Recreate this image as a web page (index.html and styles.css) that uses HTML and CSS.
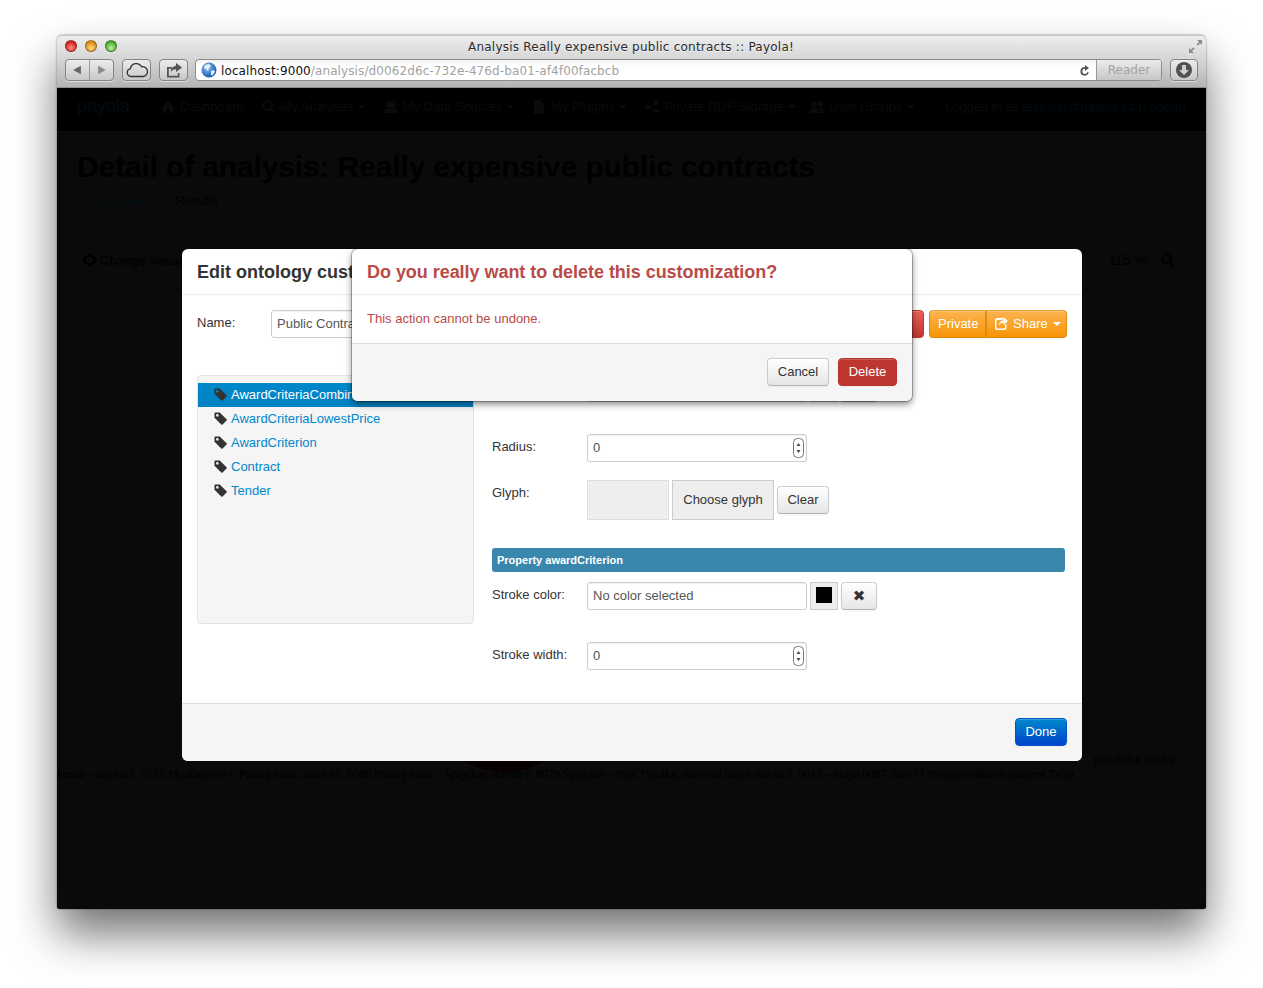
FILE: index.html
```html
<!DOCTYPE html>
<html lang="en">
<head>
<meta charset="utf-8">
<title>Analysis Really expensive public contracts :: Payola!</title>
<link rel="stylesheet" href="styles.css">
</head>
<body>
<svg class="defs" width="0" height="0" aria-hidden="true">
  <symbol id="tag" viewBox="0 0 14 14"><path fill-rule="evenodd" d="M1 0.5h5.2l7.3 7.3a1 1 0 0 1 0 1.4l-4.3 4.3a1 1 0 0 1-1.4 0L0.5 6.2V1a.5.5 0 0 1 .5-.5zM3.6 2.2a1.4 1.4 0 1 0 0 2.8 1.4 1.4 0 0 0 0-2.8z"/></symbol>
  <symbol id="spin" viewBox="0 0 11 20"><rect x=".5" y=".5" width="10" height="19" rx="4" fill="#fff" stroke="#777"/><path d="M5.5 5l2 3h-4zM5.5 15l-2-3h4z" fill="#444"/></symbol>
</svg>
<div class="window">
  <header class="chrome">
    <div class="titlebar">
      <span class="light light-red"></span><span class="light light-amber"></span><span class="light light-green"></span>
      <span class="title">Analysis Really expensive public contracts :: Payola!</span>
      <svg class="expand" width="15" height="15" viewBox="0 0 15 15"><path d="M9 1h5v5l-1.8-1.8-2.6 2.6-1.2-1.2 2.6-2.6zM6 14H1V9l1.8 1.8 2.6-2.6 1.2 1.2-2.6 2.6z" fill="#8c8c8c"/></svg>
    </div>
    <div class="toolbar">
      <div class="tool tool-nav">
        <svg width="24" height="20" viewBox="0 0 24 20"><path d="M15.500 5.500v9L7.500 10z" fill="#666"/></svg>
        <span class="tool-sep"></span>
        <svg width="24" height="20" viewBox="0 0 24 20"><path d="M8.500 5.500v9l8-4.500z" fill="#8a8a8a"/></svg>
      </div>
      <div class="tool tool-cloud">
        <svg width="24" height="16" viewBox="0 0 24 16"><path d="M6 14.5a4 4 0 0 1-.6-7.9A6 6 0 0 1 16.6 4.8 4.8 4.8 0 0 1 18.5 14.5z" fill="none" stroke="#333" stroke-width="1.3"/></svg>
      </div>
      <div class="tool tool-share">
        <svg width="18" height="16" viewBox="0 0 18 16"><path d="M2 5h5v1.8H3.8v7h9V11h1.7v4.5H2z" fill="#555"/><path d="M11 1l6 4.500-6 4.500V7.300C8.500 7.300 6.800 8.200 5.600 10.500 5.800 6.500 8 4 11 3.700z" fill="#555"/></svg>
      </div>
      <div class="urlbar">
        <svg class="globe" width="16" height="16" viewBox="0 0 16 16"><defs><radialGradient id="glb" cx=".4" cy=".35" r=".7"><stop offset="0" stop-color="#8ec5f5"/><stop offset="1" stop-color="#0b4ea8"/></radialGradient></defs><circle cx="8" cy="8" r="7.500" fill="url(#glb)"/><path d="M4 3l4-1 2 2-2 2-1 3-2-2-2-1zM10 9l3-1 1 2-3 4-1-2z" fill="#e6eef5"/></svg>
        <span class="url"><span class="url-host">localhost:9000</span>/analysis/d0062d6c-732e-476d-ba01-af4f00facbcb</span>
        <svg class="reload" width="12" height="13" viewBox="0 0 12 13"><path d="M9.800 8.600A4.300 4.300 0 1 1 6 3v-2l4 3-4 3V4.800a2.600 2.600 0 1 0 2.400 3.200z" fill="#555"/></svg>
        <span class="reader">Reader</span>
      </div>
      <div class="tool tool-download">
        <svg width="18" height="18" viewBox="0 0 18 18"><circle cx="9" cy="9" r="8" fill="#505050"/><path d="M7 4h4v5h3l-5 5-5-5h3z" fill="#d0d0d0"/></svg>
      </div>
    </div>
  </header>

  <main class="page">
    <nav class="nav">
      <span class="logo">payola</span>
      <span class="nav-item"><svg class="nav-icon" viewBox="0 0 14 14"><path d="M7 1l7 6.500h-2V13H8.500V9h-3v4H2V7.500H0z"/></svg>Dashboard</span>
      <span class="nav-item"><svg class="nav-icon" viewBox="0 0 14 14"><path fill-rule="evenodd" d="M5.500 0a5.500 5.500 0 0 1 4.400 8.800l4 4-1.200 1.200-4-4A5.500 5.500 0 1 1 5.500 0zm0 2a3.500 3.500 0 1 0 0 7 3.500 3.500 0 0 0 0-7z"/></svg>My Analyses<span class="caret"></span></span>
      <span class="nav-item"><svg class="nav-icon" viewBox="0 0 14 14"><path d="M3 1h8l1 7H2zM1 9h12v4H1z"/></svg>My Data Sources<span class="caret"></span></span>
      <span class="nav-item"><svg class="nav-icon" viewBox="0 0 14 14"><path d="M2 0h6l4 4v10H2z"/></svg>My Plugins<span class="caret"></span></span>
      <span class="nav-item nav-item-tight"><svg class="nav-icon" viewBox="0 0 14 14"><circle cx="3" cy="7" r="2.500"/><circle cx="11" cy="3" r="2.500"/><circle cx="11" cy="11" r="2.500"/><path d="M3 7l8-4M3 7l8 4" stroke="#0b0b0b"/></svg>Private RDF Storage<span class="caret"></span></span>
      <span class="nav-item"><svg class="nav-icon" viewBox="0 0 14 14"><circle cx="4.500" cy="4" r="3"/><circle cx="10" cy="4" r="3"/><path d="M0 13c0-4 2-5 4.500-5S9 9 9 13zM10 13c0-2-.4-3.500-1-5 3-.5 5 1 5 5z"/></svg>User Groups<span class="caret"></span></span>
      <span class="nav-user">Logged in as <span class="nav-link">testuser@payola.cz (Logout)</span></span>
    </nav>

    <h1 class="heading">Detail of analysis: Really expensive public contracts</h1>
    <div class="tabs"><span class="tab-active">Overview</span><span>Results</span></div>

    <div class="viewbar">
      <span class="change-visual"><svg class="eye" viewBox="0 0 16 12"><path fill-rule="evenodd" d="M8 0c4 0 7 3.500 8 6-1 2.500-4 6-8 6S1 8.500 0 6c1-2.500 4-6 8-6zm0 2.500a3.500 3.500 0 1 0 0 7 3.500 3.500 0 0 0 0-7z"/></svg>Change visualization</span>
      <span class="zoom-box">115 %<svg class="zoom-icon" viewBox="0 0 14 14"><path fill-rule="evenodd" d="M5.500 0a5.500 5.500 0 0 1 4.400 8.800l4 4-1.200 1.200-4-4A5.500 5.500 0 1 1 5.500 0zm0 2a3.500 3.500 0 1 0 0 7 3.500 3.500 0 0 0 0-7z"/></svg></span>
    </div>

    <div class="marker"></div>
    <p class="desc desc-first">provádění stavby</p>
    <p class="desc">kruhu – stavba č. 9515 Myslbekova – Prašný most, stavba č. 0080 Prašný most – Špejchar, stavba č. 0079 Špejchar – Pelc Tyrolka, stavební část a stavba č. 0012 – etapa 0007, část 11 Protipovodňová opatření Trója</p>

    <section class="modal modal-edit">
      <div class="modal-header"><h3 class="modal-title">Edit ontology customization</h3></div>
      <div class="modal-body">
        <div class="name-row">
          <span class="field-label name-label">Name:</span>
          <span class="input name-input">Public Contracts</span>
          <div class="actions">
            <span class="btn btn-danger">Delete</span>
            <div class="btn-group">
              <span class="btn btn-warning">Private</span>
              <span class="btn btn-warning"><svg class="share-icon" viewBox="0 0 13 13"><path fill-rule="evenodd" d="M2 1h6v1.500L5.500 3H2.500a1 1 0 0 0-1 1v6.500a1 1 0 0 0 1 1H9a1 1 0 0 0 1-1V8l1.500-1.200V11a2 2 0 0 1-2 2H2a2 2 0 0 1-2-2V3a2 2 0 0 1 2-2z"/><path d="M8.500 0L13 4 8.500 8V5.800C6.500 5.800 5 6.500 4 8.500 4 5.500 6 3.500 8.500 3.200z"/></svg>Share<span class="caret caret-light"></span></span>
            </div>
          </div>
        </div>
        <div class="columns">
          <ul class="classes">
            <li class="class-item class-active"><svg class="tag-icon"><use href="#tag"/></svg>AwardCriteriaCombination</li>
            <li class="class-item"><svg class="tag-icon"><use href="#tag"/></svg>AwardCriteriaLowestPrice</li>
            <li class="class-item"><svg class="tag-icon"><use href="#tag"/></svg>AwardCriterion</li>
            <li class="class-item"><svg class="tag-icon"><use href="#tag"/></svg>Contract</li>
            <li class="class-item"><svg class="tag-icon"><use href="#tag"/></svg>Tender</li>
          </ul>
          <div class="props">
            <div class="prop-row">
              <span class="field-label">Fill color:</span>
              <span class="input color-input">No color selected</span>
              <span class="swatch-btn"><span class="swatch"></span></span>
              <span class="btn clear-x">✖</span>
            </div>
            <div class="prop-row row-radius">
              <span class="field-label">Radius:</span>
              <span class="input number-input">0<svg class="spin"><use href="#spin"/></svg></span>
            </div>
            <div class="prop-row row-glyph">
              <span class="field-label">Glyph:</span>
              <span class="glyph-box"></span>
              <span class="glyph-choose">Choose glyph</span>
              <span class="btn glyph-clear">Clear</span>
            </div>
            <div class="prop-title">Property awardCriterion</div>
            <div class="prop-row">
              <span class="field-label">Stroke color:</span>
              <span class="input color-input">No color selected</span>
              <span class="swatch-btn"><span class="swatch"></span></span>
              <span class="btn clear-x">✖</span>
            </div>
            <div class="prop-row row-radius">
              <span class="field-label">Stroke width:</span>
              <span class="input number-input">0<svg class="spin"><use href="#spin"/></svg></span>
            </div>
          </div>
        </div>
      </div>
      <div class="modal-footer"><span class="btn btn-primary">Done</span></div>
    </section>

    <section class="modal modal-confirm">
      <div class="modal-header"><h3 class="modal-title title-danger">Do you really want to delete this customization?</h3></div>
      <div class="confirm-body">This action cannot be undone.</div>
      <div class="modal-footer confirm-footer"><span class="btn btn-cancel">Cancel</span><span class="btn btn-delete">Delete</span></div>
    </section>
  </main>
</div>
</body>
</html>
```
FILE: styles.css
```css
* { box-sizing: border-box; }
html, body { margin: 0; padding: 0; height: 988px; overflow: hidden; background: #fff; }
body { font-family: "Liberation Sans", Arial, sans-serif; font-size: 13px; color: #333; }
.defs { position: absolute; }

.window {
  width: 1149px; height: 874px; margin: 35px 0 0 57px;
  display: flex; flex-direction: column;
  border-radius: 5px 5px 2px 2px;
  box-shadow: 0 25px 45px rgba(0,0,0,.55), 0 0 2px rgba(0,0,0,.5);
}

/* Browser chrome */
.chrome {
  height: 53px; flex: none;
  background: linear-gradient(#ededed, #d6d6d6 45%, #b4b4b4);
  border-top: 1px solid #c4c4c4;
  border-bottom: 1px solid #8e8e8e;
  border-radius: 5px 5px 0 0;
  font-family: "DejaVu Sans", sans-serif;
}
.titlebar { position: relative; height: 23px; display: flex; align-items: center; padding: 0 0 4px 8px; gap: 8px; }
.light { width: 12px; height: 12px; border-radius: 50%; border: 1px solid rgba(0,0,0,.35); }
.light-red { background: radial-gradient(circle at 50% 70%, #ff8f8a, #d8201c 70%); }
.light-amber { background: radial-gradient(circle at 50% 70%, #ffd98a, #d98b12 70%); }
.light-green { background: radial-gradient(circle at 50% 70%, #bdf29a, #4da82c 70%); }
.title { position: absolute; left: 411px; top: 3px; font-size: 12px; letter-spacing: .23px; line-height: 17px; color: #2a2a2a; white-space: nowrap; text-shadow: 0 1px 0 rgba(255,255,255,.6); }
.expand { position: absolute; right: 3px; top: 3px; }
.toolbar { display: flex; align-items: flex-start; padding-left: 8px; }
.tool {
  height: 22px; display: flex; align-items: center; justify-content: center;
  border: 1px solid #858585; border-radius: 4px;
  background: linear-gradient(#ececec, #c8c8c8);
  box-shadow: 0 1px 0 rgba(255,255,255,.5);
}
.tool-nav { width: 49px; }
.tool-sep { width: 1px; height: 20px; background: #9a9a9a; }
.tool-cloud { width: 29px; margin-left: 8px; }
.tool-share { width: 29px; margin-left: 8px; }
.tool-download { width: 28px; margin-left: 8px; }
.urlbar {
  width: 967px; height: 22px; margin-left: 7px;
  display: flex; align-items: center;
  background: linear-gradient(#f2f2f2, #fff 30%);
  border: 1px solid #8c8c8c; border-radius: 4px; padding-left: 5px;
  overflow: hidden;
}
.globe { flex: none; }
.url { margin-left: 4px; padding-top: 1px; font-size: 12px; letter-spacing: .1px; color: #a2a2a2; white-space: nowrap; flex: 1; }
.url-host { color: #111; }
.reload { flex: none; margin-right: 5px; }
.reader {
  width: 65px; height: 20px; flex: none; text-align: center; line-height: 21px;
  font-size: 12px; color: #a4a4a4; background: linear-gradient(#ececec, #c6c6c6);
  border-left: 1px solid #9a9a9a;
}

/* Dimmed page behind the dialogs */
.page { position: relative; flex: 1; background: #0a0a0a; overflow: hidden; color: #000; border-radius: 0 0 2px 2px; }
.nav {
  height: 44px; background: #000; border-bottom: 1px solid #0f0f0f;
  display: flex; align-items: center; gap: 10px; padding: 0 20px 6px 20px; color: #0b0b0b; white-space: nowrap;
}
.logo { width: 74px; font-size: 18px; color: #010d10; }
.nav-item { display: flex; align-items: center; padding-right: 8px; }
.nav-item-tight { padding-right: 4px; }
.nav-icon { width: 14px; height: 14px; margin-right: 5px; fill: #0b0b0b; }
.caret { display: inline-block; margin-left: 4px; border-top: 4px solid #0b0b0b; border-left: 4px solid transparent; border-right: 4px solid transparent; }
.caret-light { border-top-color: #fff; vertical-align: 2px; margin-left: 5px; }
.nav-user { margin-left: auto; font-size: 12.8px; }
.nav-link { color: #000c12; }
.heading { margin: 15px 0 0 20px; font-size: 30px; letter-spacing: -.14px; line-height: 40px; font-weight: bold; color: #000; white-space: nowrap; }
.tabs { display: flex; gap: 29px; margin: 4px 0 0 35px; line-height: 20px; color: #000; }
.tab-active { color: #000a10; }
.viewbar { display: flex; justify-content: space-between; margin: 37px 31px 0 21px; height: 24px; align-items: center; white-space: nowrap; font-size: 13px; }
.change-visual { display: flex; align-items: center; padding-left: 4px; }
.eye { width: 15px; height: 12px; margin-right: 3px; fill: #000; }
.zoom-box { display: flex; align-items: center; font-size: 14px; }
.zoom-icon { width: 14px; height: 14px; margin-left: 14px; fill: #000; }
.marker { position: absolute; left: 369px; top: 528px; width: 156px; height: 156px; border-radius: 50%; background: #080000; }
.desc { position: relative; margin: 0; font-family: "Liberation Serif", serif; font-size: 12px; letter-spacing: -.05px; line-height: 15px; color: #000; white-space: nowrap; }
.desc-first { margin-top: 480px; text-align: right; padding-right: 31px; }

/* Dialogs */
.modal {
  position: absolute; top: 161px; background: #fff;
  border-radius: 6px; display: flex; flex-direction: column; overflow: hidden;
}
.modal-edit { left: 125px; width: 900px; height: 512px; }
.modal-confirm { left: 295px; width: 560px; height: 152px; box-shadow: 0 0 0 1px rgba(0,0,0,.25), 0 3px 7px rgba(0,0,0,.5); }
.modal-header { height: 46px; flex: none; padding: 0 15px; border-bottom: 1px solid #eee; display: flex; align-items: center; }
.modal-title { margin: 0; font-size: 18px; line-height: 24px; font-weight: bold; color: #333; white-space: nowrap; }
.title-danger { color: #b94a48; letter-spacing: -.04px; }
.modal-body { flex: 1; padding: 15px; color: #333; }
.modal-footer { flex: none; height: 58px; background: #f5f5f5; border-top: 1px solid #ddd; padding: 14px 15px 0; display: flex; justify-content: flex-end; }
.confirm-body { flex: 1; padding: 15px; line-height: 18px; color: #b94a48; }
.confirm-footer { gap: 9px; }

.name-row { display: flex; align-items: flex-start; height: 28px; }
.field-label { flex: none; width: 95px; padding-top: 4px; line-height: 18px; color: #333; }
.name-label { width: 74px; }
.input { display: block; height: 28px; background: #fff; border: 1px solid #ccc; border-radius: 3px; padding: 0 5px; line-height: 26px; color: #555; box-shadow: inset 0 1px 1px rgba(0,0,0,.06); white-space: nowrap; }
.name-input { width: 330px; }
.actions { margin-left: auto; display: flex; gap: 5px; }
.btn-group { display: flex; }
.btn {
  display: inline-block; height: 28px; padding: 0 11px; line-height: 26px; text-align: center;
  border: 1px solid #ccc; border-bottom-color: #b3b3b3; border-radius: 4px; color: #333;
  background: linear-gradient(#fff, #e6e6e6); white-space: nowrap;
  box-shadow: inset 0 1px 0 rgba(255,255,255,.2), 0 1px 2px rgba(0,0,0,.05);
}
.btn-danger { width: 65px; color: #fff; background: linear-gradient(#ee5f5b, #bd362f); border-color: #bd362f; }
.btn-warning { color: #fff; background: linear-gradient(#fbb450, #f89406); border-color: #f0a030 #e08c0c #d98606; padding: 0 8px; }
.btn-group .btn-warning:first-child { border-radius: 4px 0 0 4px; width: 57px; }
.btn-group .btn-warning:last-child { border-radius: 0 4px 4px 0; width: 81px; border-left-color: #e08c0c; }
.share-icon { width: 13px; height: 13px; margin-right: 5px; vertical-align: -2px; fill: #fff; }
.btn-primary { width: 52px; padding: 0; color: #fff; background: linear-gradient(#0088cc, #0044cc); border-color: #0055cc; }
.btn-cancel { width: 62px; padding: 0; }
.btn-delete { width: 59px; padding: 0; color: #fff; background: #bd362f; border-color: #b5332c; }

.columns { display: flex; gap: 18px; margin-top: 37px; }
.classes { list-style: none; margin: 0; padding: 7px 0 0; width: 277px; height: 249px; background: #f5f5f5; border: 1px solid #e3e3e3; border-radius: 4px; }
.class-item { height: 24px; padding: 0 0 2px 16px; display: flex; align-items: center; color: #0088cc; white-space: nowrap; overflow: hidden; }
.class-active { color: #fff; background: linear-gradient(#0088cc, #0081c2); }
.tag-icon { width: 13px; height: 13px; margin: 0 4px 0 0; flex: none; fill: #333; }
.props { width: 573px; margin-top: -1px; }
.prop-row { display: flex; align-items: flex-start; }
.color-input { width: 220px; }
.swatch-btn { width: 28px; height: 28px; margin-left: 3px; display: flex; justify-content: center; padding-top: 4px; background: #eee; border: 1px solid #ccc; }
.swatch { width: 16px; height: 16px; background: #000; }
.clear-x { width: 36px; padding: 0; margin-left: 3px; font-family: "DejaVu Sans", sans-serif; font-size: 15px; }
.row-radius { margin-top: 32px; }
.number-input { position: relative; width: 220px; }
.spin { position: absolute; right: 2px; top: 3px; width: 11px; height: 20px; }
.row-glyph { margin-top: 18px; }
.glyph-box { width: 82px; height: 40px; background: #eee; border: 1px solid #ddd; }
.glyph-choose { width: 102px; height: 40px; margin-left: 3px; line-height: 38px; text-align: center; background: #eee; border: 1px solid #ccc; color: #333; }
.glyph-clear { width: 52px; padding: 0; margin: 6px 0 0 3px; }
.prop-title { margin: 28px 0 10px; height: 24px; line-height: 24px; padding-left: 5px; font-size: 11px; font-weight: bold; color: #fff; background: #3a87ad; border-radius: 3px; }
```
